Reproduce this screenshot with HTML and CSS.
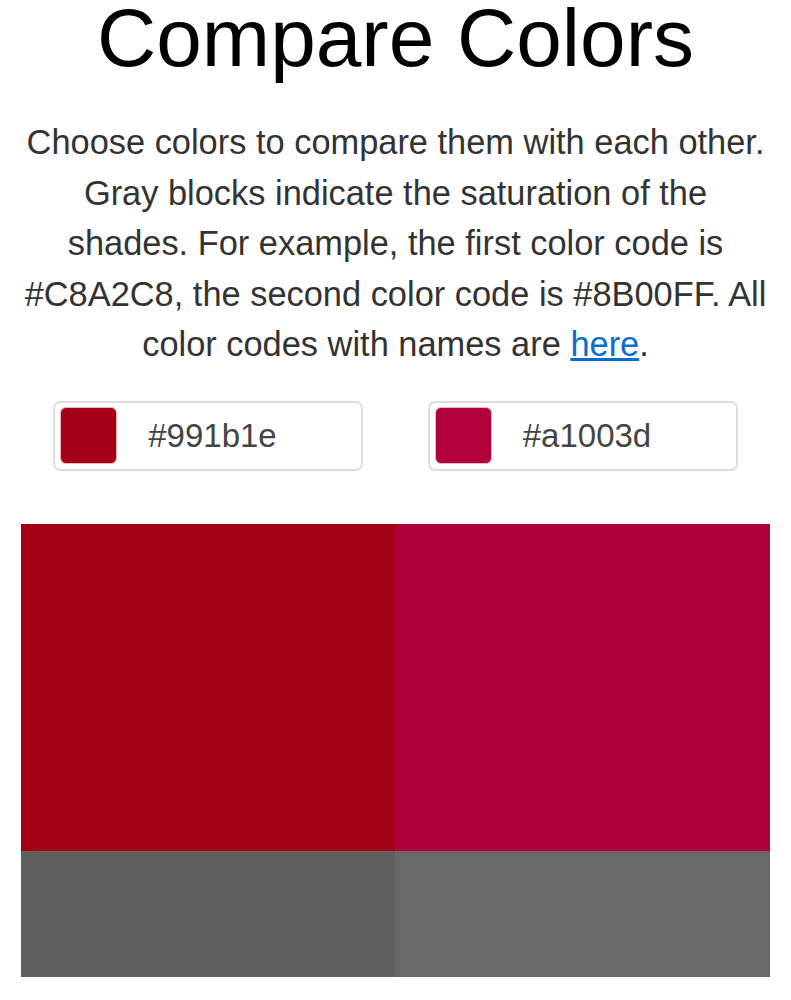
FILE: index.html
```html
<!DOCTYPE html>
<html lang="en">
<head>
<meta charset="utf-8">
<title>Compare Colors</title>
<link rel="stylesheet" href="styles.css">
</head>
<body>
<main class="page">
  <h1 class="title">Compare Colors</h1>
  <p class="intro">Choose colors to compare them with each other. Gray blocks indicate the saturation of the shades. For example, the first color code is #C8A2C8, the second color code is #8B00FF. All color codes with names are <a href="#" class="link">here</a>.</p>
  <div class="pickers">
    <div class="picker-cell">
      <label class="picker">
        <span class="swatch swatch-a"></span>
        <span class="code">#991b1e</span>
      </label>
    </div>
    <div class="picker-cell">
      <label class="picker">
        <span class="swatch swatch-b"></span>
        <span class="code">#a1003d</span>
      </label>
    </div>
  </div>
  <div class="compare">
    <div class="col">
      <div class="color color-a"></div>
      <div class="gray gray-a"></div>
    </div>
    <div class="col">
      <div class="color color-b"></div>
      <div class="gray gray-b"></div>
    </div>
  </div>
</main>
</body>
</html>
```

FILE: styles.css
```css
html, body {
  margin: 0;
  padding: 0;
  background: #fff;
}
body {
  font-family: "Liberation Sans", Arial, sans-serif;
}
.page {
  width: 749px;
  margin: 0 auto;
  padding: 0 21px;
  box-sizing: content-box;
}
.title {
  margin: 0;
  font-size: 82px;
  font-weight: 400;
  line-height: 76px;
  color: #000;
  text-align: center;
}
.intro {
  max-width: 748px;
  margin: 41px auto 0;
  font-size: 34.4px;
  line-height: 50.5px;
  color: #333;
  text-align: center;
}
.link {
  color: #0a6ccf;
  text-decoration: underline;
}
.pickers {
  display: grid;
  grid-template-columns: 1fr 1fr;
  margin-top: 31px;
}
.picker-cell {
  display: flex;
  justify-content: center;
}
.picker {
  width: 310px;
  height: 70px;
  box-sizing: border-box;
  border: 2px solid #dedede;
  border-radius: 7px;
  display: flex;
  align-items: center;
  padding-left: 5px;
}
.swatch {
  width: 57px;
  height: 57px;
  box-sizing: border-box;
  border-radius: 6px;
  border: 1px solid #e3b9bd;
}
.swatch-a { background: #a50016; }
.swatch-b { background: #b1003b; border-color: #e6b7c6; }
.code {
  margin-left: 31px;
  font-size: 33px;
  color: #444;
}
.compare {
  display: grid;
  grid-template-columns: 374px 375px;
  margin-top: 53px;
}
.color {
  height: 327px;
}
.gray {
  height: 126px;
}
.color-a { background: #a40014; }
.color-b { background: #b0003b; }
.gray-a { background: #5f5f5f; }
.gray-b { background: #686868; }
```
